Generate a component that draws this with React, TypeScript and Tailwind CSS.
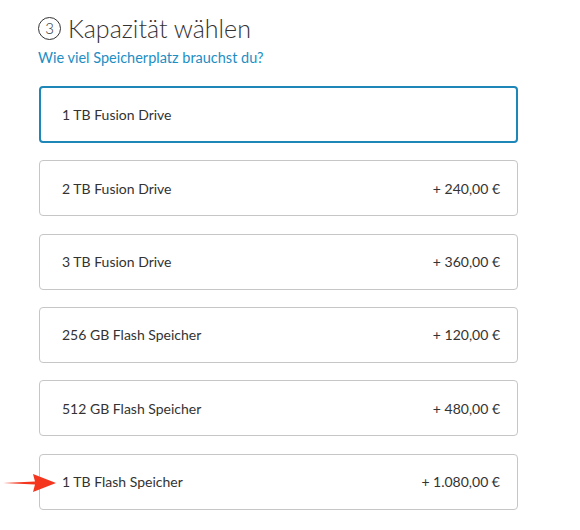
import React from 'react';

interface Option {
  label: string;
  price?: string;
  selected?: boolean;
  marked?: boolean;
}

const options: Option[] = [
  { label: '1 TB Fusion Drive', selected: true },
  { label: '2 TB Fusion Drive', price: '+ 240,00 €' },
  { label: '3 TB Fusion Drive', price: '+ 360,00 €' },
  { label: '256 GB Flash Speicher', price: '+ 120,00 €' },
  { label: '512 GB Flash Speicher', price: '+ 480,00 €' },
  { label: '1 TB Flash Speicher', price: '+ 1.080,00 €', marked: true },
];

const Arrow: React.FC = () => (
  <svg className="absolute left-[-37px] top-[17px]" width="54" height="22" viewBox="0 0 54 22">
    <path d="M0 11 L32 9.5 L30 2 L53 11 L30 20 L32 12.5 Z" fill="#f4361f" />
  </svg>
);

const App: React.FC = () => {
  return (
    <div className="w-[580px] h-[530px] bg-white overflow-hidden font-['Lato',sans-serif] text-[#333]">
      <div className="pl-[38px] pt-[14px]">
        <div className="flex items-center gap-[7px]">
          <span className="w-[23px] h-[23px] rounded-full border border-[#333] flex items-center justify-center text-[15px] font-light leading-none">3</span>
          <h2 className="text-[25px] font-light leading-[28px]">Kapazität wählen</h2>
        </div>
        <p className="mt-[5px] text-[14.5px] text-[#1d8ec4]">Wie viel Speicherplatz brauchst du?</p>
      </div>
      <div className="mt-[17px] ml-[39px] w-[479px] flex flex-col gap-[17.4px]">
        {options.map(opt => (
          <div
            key={opt.label}
            className={
              opt.selected
                ? 'relative h-[57px] rounded-[4px] border-2 border-[#1f86b8] flex items-center justify-between pl-[21px] pr-[17px] text-[14px]'
                : 'relative h-[56px] rounded-[4px] border border-[#c6c6c6] flex items-center justify-between pl-[22px] pr-[17px] text-[14px]'
            }
          >
            {opt.marked && <Arrow />}
            <span>{opt.label}</span>
            {opt.price && <span>{opt.price}</span>}
          </div>
        ))}
      </div>
    </div>
  );
};

export default App;
